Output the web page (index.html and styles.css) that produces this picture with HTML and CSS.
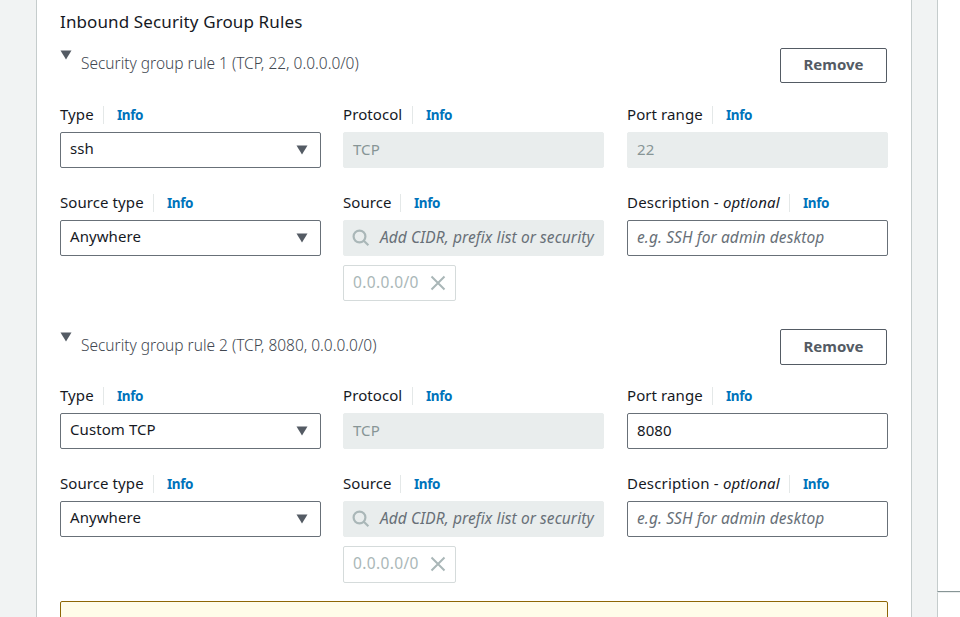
FILE: index.html
```html
<!DOCTYPE html>
<html lang="en">
<head>
<meta charset="utf-8">
<title>Inbound Security Group Rules</title>
<link rel="stylesheet" href="styles.css">
</head>
<body>
<div class="page">
<main class="panel">
<h2>Inbound Security Group Rules</h2>
<section class="rule">
<header class="rule-head"><svg class="caret" viewBox="0 0 12 10"><path d="M.5.5h11L6 9.5z"/></svg><h3>Security group rule 1 (TCP, 22, 0.0.0.0/0)</h3><button class="remove">Remove</button></header>
<div class="grid">
<div class="field"><div class="label"><span class="w-type">Type</span><a>Info</a></div><div class="box select"><span>ssh</span><svg class="arrow" viewBox="0 0 12 10"><path d="M.5.5h11L6 9.5z"/></svg></div></div>
<div class="field"><div class="label"><span class="w-protocol">Protocol</span><a>Info</a></div><div class="box disabled"><span>TCP</span></div></div>
<div class="field"><div class="label"><span class="w-port">Port range</span><a>Info</a></div><div class="box disabled"><span>22</span></div></div>
<div class="field"><div class="label"><span class="w-stype">Source type</span><a>Info</a></div><div class="box select"><span>Anywhere</span><svg class="arrow" viewBox="0 0 12 10"><path d="M.5.5h11L6 9.5z"/></svg></div></div>
<div class="field"><div class="label"><span class="w-source">Source</span><a>Info</a></div><div class="box disabled search"><svg class="glass" viewBox="0 0 18 18"><circle cx="7.5" cy="7.5" r="5.9"/><path d="M11.8 11.8l4.6 4.4"/></svg><em>Add CIDR, prefix list or security</em></div><div class="token"><span>0.0.0.0/0</span><svg viewBox="0 0 16 16"><path d="M1.5 1.5l13 13M14.500 1.500l-13 13"/></svg></div></div>
<div class="field"><div class="label"><span class="w-desc">Description - <i>optional</i></span><a>Info</a></div><div class="box hint"><em>e.g. SSH for admin desktop</em></div></div>
</div>
</section>
<section class="rule second">
<header class="rule-head"><svg class="caret" viewBox="0 0 12 10"><path d="M.5.5h11L6 9.5z"/></svg><h3>Security group rule 2 (TCP, 8080, 0.0.0.0/0)</h3><button class="remove">Remove</button></header>
<div class="grid">
<div class="field"><div class="label"><span class="w-type">Type</span><a>Info</a></div><div class="box select"><span>Custom TCP</span><svg class="arrow" viewBox="0 0 12 10"><path d="M.5.5h11L6 9.5z"/></svg></div></div>
<div class="field"><div class="label"><span class="w-protocol">Protocol</span><a>Info</a></div><div class="box disabled"><span>TCP</span></div></div>
<div class="field"><div class="label"><span class="w-port">Port range</span><a>Info</a></div><div class="box"><span>8080</span></div></div>
<div class="field"><div class="label"><span class="w-stype">Source type</span><a>Info</a></div><div class="box select"><span>Anywhere</span><svg class="arrow" viewBox="0 0 12 10"><path d="M.5.5h11L6 9.5z"/></svg></div></div>
<div class="field"><div class="label"><span class="w-source">Source</span><a>Info</a></div><div class="box disabled search"><svg class="glass" viewBox="0 0 18 18"><circle cx="7.5" cy="7.5" r="5.9"/><path d="M11.8 11.8l4.6 4.4"/></svg><em>Add CIDR, prefix list or security</em></div><div class="token"><span>0.0.0.0/0</span><svg viewBox="0 0 16 16"><path d="M1.5 1.5l13 13M14.500 1.500l-13 13"/></svg></div></div>
<div class="field"><div class="label"><span class="w-desc">Description - <i>optional</i></span><a>Info</a></div><div class="box hint"><em>e.g. SSH for admin desktop</em></div></div>
</div>
</section>
<div class="alert"></div>
</main>
<aside class="side"><div class="side-top"></div><div class="side-bottom"></div></aside>
</div>
</body>
</html>
```
FILE: styles.css
```css
* { box-sizing: border-box; }
body { margin: 0; background: #f1f3f3; color: #16191f; font: 15px/20px "Noto Sans", "Open Sans", sans-serif; letter-spacing: 0.08px; }
.page { display: flex; height: 617px; overflow: hidden; padding-left: 36px; }
.panel { width: 876px; flex: none; background: #fff; border: solid #c5cccc; border-width: 0 1px; padding: 10px 23px 0; }
h2 { margin: 0; font-size: 17px; font-weight: 400; line-height: 24px; height: 38px; white-space: nowrap; letter-spacing: 0.12px; }
.rule { height: 281px; }
.rule-head { display: flex; height: 58px; padding-right: 1px; }
.caret { width: 12px; height: 10px; margin-top: 2px; fill: #545b64; }
h3 { margin: 5px 0 0 9px; font-size: 15.5px; font-weight: 300; line-height: 20px; flex: 1; white-space: nowrap; color: #414750; letter-spacing: -0.01px; }
.second .caret { margin-top: 3px; }
.second h3 { margin-top: 6px; }
.second .remove { height: 36px; }
.second .token { height: 37px; }
.remove { width: 107px; height: 35px; border: 1px solid #545b64; border-radius: 2px; background: #fff; color: #545b64; font: 700 15px/20px "Noto Sans", sans-serif; letter-spacing: 0; padding: 0 0 3px; }
.grid { display: grid; grid-template-columns: 261px 262px 261px; column-gap: 22px; grid-template-rows: 88px auto; }
.field { width: 261px; }
.label { display: flex; align-items: center; height: 18px; margin-bottom: 8px; line-height: 16px; white-space: nowrap; }
.label span { height: 18px; border-right: 1px solid #e4e8e8; }
.label a { margin-left: 13px; color: #0073bb; font-weight: 700; font-size: 13.5px; letter-spacing: -0.4px; }
.w-type { width: 44px; }
.w-protocol { width: 70px; }
.w-port { width: 86px; }
.w-stype { width: 94px; }
.w-source { width: 58px; }
.w-desc { width: 163px; letter-spacing: 0.18px; }
.box { display: flex; align-items: center; height: 36px; border: 1px solid #687078; border-radius: 2px; padding: 0 9px; background: #fff; white-space: nowrap; }
.box span, .box em { margin-top: -2px; }
.select { justify-content: space-between; padding-right: 12px; }
.select span { margin-top: -4px; }
.arrow { width: 12px; height: 10px; fill: #545b64; }
.disabled { background: #e9eded; border-color: #e9eded; color: #879596; }
.box em { color: #687078; font-size: 15.5px; letter-spacing: 0.09px; }
.glass { width: 18px; height: 18px; margin-right: 10px; flex: none; fill: none; stroke: #aab7b8; stroke-width: 2.2; }
.search { padding-left: 8px; }
.glass { margin-right: 10px; }
.token { display: flex; align-items: center; justify-content: space-between; width: 113px; height: 36px; margin-top: 9px; padding: 0 9px; border: 1px solid #d5dbdb; border-radius: 2px; color: #aab7b8; }
.token span { margin-top: -3px; font-size: 15.5px; letter-spacing: 0.35px; }
.token svg { width: 16px; height: 16px; margin-top: -1px; fill: none; stroke: #aab7b8; stroke-width: 2; }
.alert { height: 40px; margin-top: -9px; width: 828px; border: 1px solid #8d6605; border-radius: 2px; background: #fffce9; }
.side { flex: 1; margin-left: 25px; }
.side-top { height: 592px; background: #fff; border-left: 1px solid #c5cccc; border-bottom: 1px solid #879596; }
.side-bottom { height: 25px; background: #fff; border-left: 1px solid #c5cccc; border-top: 1px solid #eaeded; }
```
